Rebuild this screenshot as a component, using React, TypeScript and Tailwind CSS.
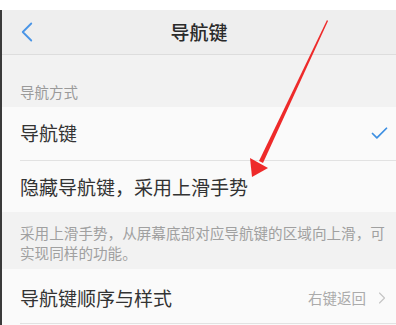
import { Check, ChevronLeft, ChevronRight } from "lucide-react";

const font = { fontFamily: '"Noto Sans CJK SC", "Noto Sans", sans-serif' };

const Divider = () => <div className="ml-[18px] h-px bg-[#e2e2e2]" />;

const App = () => {
  return (
    <div
      className="relative w-[396px] h-[325px] overflow-hidden bg-white"
      style={font}
    >
      <div className="h-[10px] bg-white" />
      <div className="flex flex-col border-l-2 border-[#3a3a3a] h-[315px] bg-[#f2f2f2]">
        {/* header */}
        <header className="relative flex h-[45px] items-center justify-center bg-[#eeeeee] border-b border-[#dddddd]">
          <ChevronLeft
            className="absolute left-[8px] text-[#4a95e6]"
            size={34}
            strokeWidth={1.3}
          />
          <h1 className="text-[19px] font-medium text-[#2a2a2a]">导航键</h1>
        </header>

        <div className="h-[52px] px-[18px] pt-[27px] text-[14.5px] leading-[20px] text-[#9a9a9a]">
          导航方式
        </div>

        <div className="flex h-[53px] items-center justify-between bg-[#fafafa] px-[18px] pr-[6px]">
          <span className="text-[19px] text-[#333]">导航键</span>
          <Check className="text-[#3d8fe2]" size={21} strokeWidth={2} />
        </div>
        <div className="bg-[#fafafa]">
          <Divider />
        </div>
        <div className="flex h-[51px] items-center bg-[#fafafa] px-[18px] pt-[2px]">
          <span className="text-[19px] text-[#333]">隐藏导航键，采用上滑手势</span>
        </div>

        <div className="h-[57px] pl-[18px] pt-[11px] text-[14.6px] leading-[20px] whitespace-nowrap text-[#a0a0a0]">
          采用上滑手势，从屏幕底部对应导航键的区域向上滑，可
          <br />
          实现同样的功能。
        </div>

        <div className="flex h-[54px] items-center justify-between bg-[#fafafa] pl-[18px] pr-[4px] pt-[4px]">
          <span className="text-[19px] text-[#333]">导航键顺序与样式</span>
          <span className="flex items-center gap-[6px] text-[14.5px] text-[#ababab]">
            右键返回
            <ChevronRight size={20} strokeWidth={1.3} className="text-[#c4c4c4]" />
          </span>
        </div>
        <div className="bg-[#fafafa] flex-1">
          <Divider />
        </div>
      </div>

      {/* red annotation arrow */}
      <svg
        className="absolute left-0 top-0 pointer-events-none"
        width="396"
        height="325"
        viewBox="0 0 396 325"
      >
        <polygon points="327,20 328,21 263,163 259,161" fill="#ee2a2a" />
        <polygon points="252,177 250,158 268,168" fill="#ee2a2a" />
      </svg>
    </div>
  );
};

export default App;
